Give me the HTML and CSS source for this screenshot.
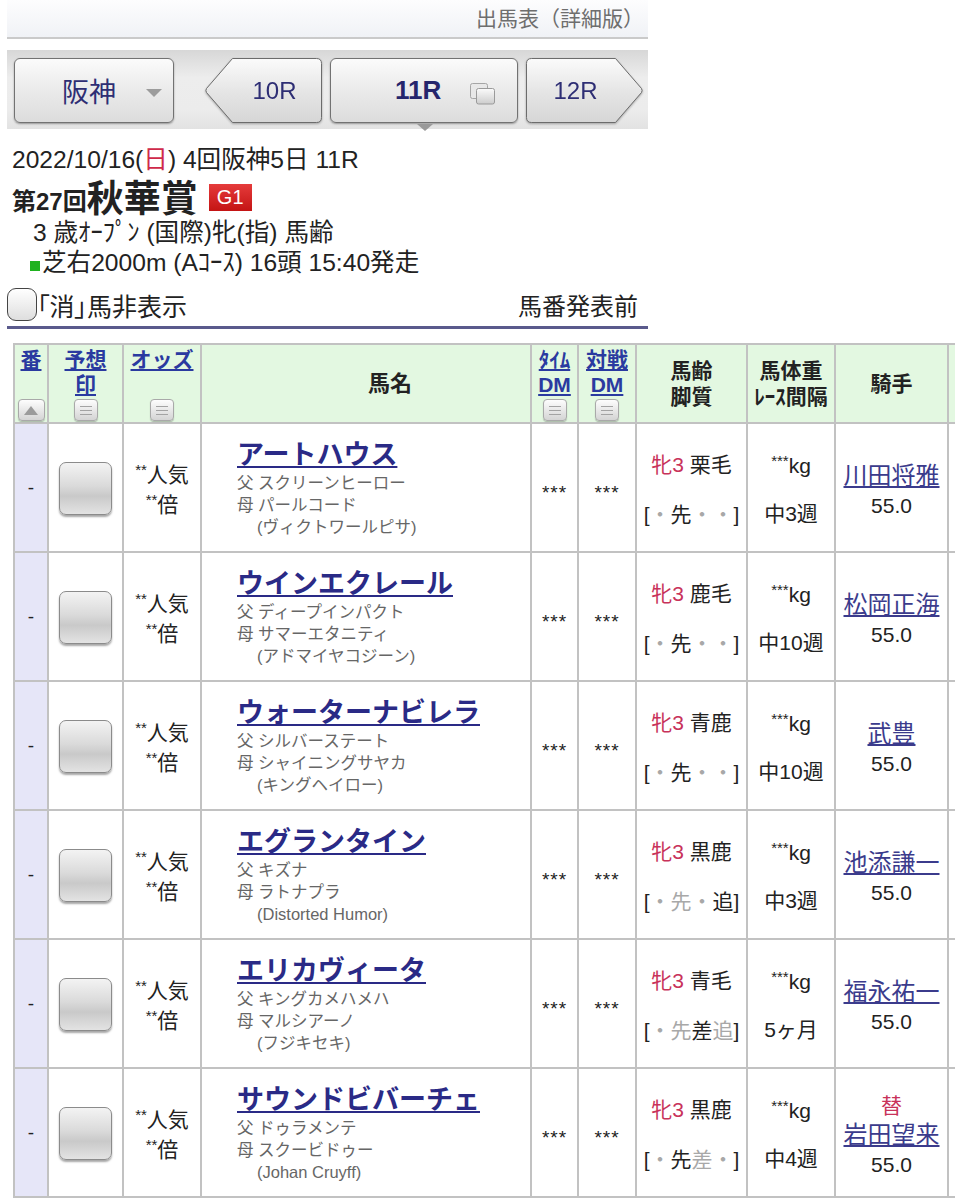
FILE: index.html
```html
<!DOCTYPE html>
<html lang="ja">
<head>
<meta charset="utf-8">
<title>出馬表（詳細版）</title>
<link rel="stylesheet" href="styles.css">
</head>
<body>
<div class="top">
  <header class="titlebar">出馬表（詳細版）</header>
  <nav class="racenav">
    <div class="btn place">阪神<span class="caret"></span></div>
    <div class="btn arrow prev">
      <svg class="shape" viewBox="0 0 117 65" width="117" height="65">
        <defs><linearGradient id="gp" x1="0" y1="0" x2="0" y2="1"><stop offset="0" stop-color="#fbfbfb"/><stop offset="0.55" stop-color="#e4e4e4"/><stop offset="1" stop-color="#d6d6d6"/></linearGradient></defs>
        <path d="M27.5,0.5 H111.5 Q116.5,0.5 116.5,5.5 V59.5 Q116.5,64.5 111.5,64.5 H27.5 L1.5,34.5 Q0.3,32.5 1.5,30.5 Z" fill="url(#gp)" stroke="#6c6c6c"/>
      </svg>
      <span class="lbl">10R</span>
    </div>
    <div class="btn cur">
      <span class="lbl">11R</span>
      <svg class="copy" viewBox="0 0 26 22" width="26" height="22">
        <defs><linearGradient id="gc" x1="0" y1="0" x2="0" y2="1"><stop offset="0" stop-color="#fbfbfb"/><stop offset="1" stop-color="#cdcdcd"/></linearGradient></defs>
        <rect x="0.5" y="0.5" width="17" height="15" rx="2" fill="#e8e8e8" stroke="#a5a5a5"/>
        <rect x="6.5" y="5.5" width="18" height="15.5" rx="2" fill="url(#gc)" stroke="#9a9a9a"/>
      </svg>
      <span class="pointer"></span>
    </div>
    <div class="btn arrow next">
      <svg class="shape" viewBox="0 0 117 65" width="117" height="65">
        <defs><linearGradient id="gn" x1="0" y1="0" x2="0" y2="1"><stop offset="0" stop-color="#fbfbfb"/><stop offset="0.55" stop-color="#e4e4e4"/><stop offset="1" stop-color="#d6d6d6"/></linearGradient></defs>
        <path d="M5.5,0.5 H89.5 L115.5,30.5 Q116.7,32.5 115.5,34.5 L89.5,64.5 H5.5 Q0.5,64.5 0.5,59.5 V5.5 Q0.5,0.5 5.5,0.5 Z" fill="url(#gn)" stroke="#6c6c6c"/>
      </svg>
      <span class="lbl">12R</span>
    </div>
  </nav>
  <section class="info">
    <div class="date">2022/10/16(<span class="sun">日</span>) 4回阪神5日 11R</div>
    <h1 class="race"><span class="kai">第27回</span>秋華賞<span class="grade">G1</span></h1>
    <div class="cond">3 歳ｵｰﾌﾟﾝ (国際)牝(指) 馬齢</div>
    <div class="course"><span class="sq"></span>芝右2000m (Aｺｰｽ) 16頭 15:40発走</div>
  </section>
  <div class="filter">
    <span class="hide"><span class="check"></span><span class="palt">「消」馬非表示</span></span>
    <span class="status">馬番発表前</span>
  </div>
</div>

<div class="tablewrap">
<table class="entries">
  <thead>
    <tr>
      <th class="c-no"><div class="hcell"><a href="#">番</a><span class="sort up"></span></div></th>
      <th class="c-mark"><div class="hcell"><a href="#">予想<br>印</a><span class="sort"></span></div></th>
      <th class="c-odds"><div class="hcell"><a href="#">オッズ</a><span class="sort"></span></div></th>
      <th class="c-name">馬名</th>
      <th class="c-tdm"><div class="hcell"><a href="#">ﾀｲﾑ<br>DM</a><span class="sort"></span></div></th>
      <th class="c-vdm"><div class="hcell"><a href="#">対戦<br>DM</a><span class="sort"></span></div></th>
      <th class="c-age">馬齢<br>脚質</th>
      <th class="c-wt">馬体重<br>ﾚｰｽ間隔</th>
      <th class="c-jk">騎手</th>
      <th class="c-ex"></th>
    </tr>
  </thead>
  <tbody>
    <tr>
      <td class="no">-</td>
      <td class="mk"><span class="markbtn"></span></td>
      <td class="od"><span class="ast">**</span>人気<br><span class="ast">**</span>倍</td>
      <td class="nm"><a class="horse" href="#">アートハウス</a><div class="ped">父 スクリーンヒーロー<br>母 パールコード<br><span class="bms">(ヴィクトワールピサ)</span></div></td>
      <td class="dm">***</td>
      <td class="dm">***</td>
      <td class="ag"><span class="sex">牝3</span> 栗毛<br><span class="st">[<i>・</i>先<i>・</i><i>・</i>]</span></td>
      <td class="wt"><span class="ast">***</span>kg<br>中3週</td>
      <td class="jk"><a href="#">川田将雅</a><br>55.0</td>
      <td class="ex"></td>
    </tr>
    <tr>
      <td class="no">-</td>
      <td class="mk"><span class="markbtn"></span></td>
      <td class="od"><span class="ast">**</span>人気<br><span class="ast">**</span>倍</td>
      <td class="nm"><a class="horse" href="#">ウインエクレール</a><div class="ped">父 ディープインパクト<br>母 サマーエタニティ<br><span class="bms">(アドマイヤコジーン)</span></div></td>
      <td class="dm">***</td>
      <td class="dm">***</td>
      <td class="ag"><span class="sex">牝3</span> 鹿毛<br><span class="st">[<i>・</i>先<i>・</i><i>・</i>]</span></td>
      <td class="wt"><span class="ast">***</span>kg<br>中10週</td>
      <td class="jk"><a href="#">松岡正海</a><br>55.0</td>
      <td class="ex"></td>
    </tr>
    <tr>
      <td class="no">-</td>
      <td class="mk"><span class="markbtn"></span></td>
      <td class="od"><span class="ast">**</span>人気<br><span class="ast">**</span>倍</td>
      <td class="nm"><a class="horse" href="#">ウォーターナビレラ</a><div class="ped">父 シルバーステート<br>母 シャイニングサヤカ<br><span class="bms">(キングヘイロー)</span></div></td>
      <td class="dm">***</td>
      <td class="dm">***</td>
      <td class="ag"><span class="sex">牝3</span> 青鹿<br><span class="st">[<i>・</i>先<i>・</i><i>・</i>]</span></td>
      <td class="wt"><span class="ast">***</span>kg<br>中10週</td>
      <td class="jk"><a href="#">武豊</a><br>55.0</td>
      <td class="ex"></td>
    </tr>
    <tr>
      <td class="no">-</td>
      <td class="mk"><span class="markbtn"></span></td>
      <td class="od"><span class="ast">**</span>人気<br><span class="ast">**</span>倍</td>
      <td class="nm"><a class="horse" href="#">エグランタイン</a><div class="ped">父 キズナ<br>母 ラトナプラ<br><span class="bms">(Distorted Humor)</span></div></td>
      <td class="dm">***</td>
      <td class="dm">***</td>
      <td class="ag"><span class="sex">牝3</span> 黒鹿<br><span class="st">[<i>・</i><i>先</i><i>・</i>追]</span></td>
      <td class="wt"><span class="ast">***</span>kg<br>中3週</td>
      <td class="jk"><a href="#">池添謙一</a><br>55.0</td>
      <td class="ex"></td>
    </tr>
    <tr>
      <td class="no">-</td>
      <td class="mk"><span class="markbtn"></span></td>
      <td class="od"><span class="ast">**</span>人気<br><span class="ast">**</span>倍</td>
      <td class="nm"><a class="horse" href="#">エリカヴィータ</a><div class="ped">父 キングカメハメハ<br>母 マルシアーノ<br><span class="bms">(フジキセキ)</span></div></td>
      <td class="dm">***</td>
      <td class="dm">***</td>
      <td class="ag"><span class="sex">牝3</span> 青毛<br><span class="st">[<i>・</i><i>先</i>差<i>追</i>]</span></td>
      <td class="wt"><span class="ast">***</span>kg<br>5ヶ月</td>
      <td class="jk"><a href="#">福永祐一</a><br>55.0</td>
      <td class="ex"></td>
    </tr>
    <tr>
      <td class="no">-</td>
      <td class="mk"><span class="markbtn"></span></td>
      <td class="od"><span class="ast">**</span>人気<br><span class="ast">**</span>倍</td>
      <td class="nm"><a class="horse" href="#">サウンドビバーチェ</a><div class="ped">父 ドゥラメンテ<br>母 スクービドゥー<br><span class="bms">(Johan Cruyff)</span></div></td>
      <td class="dm">***</td>
      <td class="dm">***</td>
      <td class="ag"><span class="sex">牝3</span> 黒鹿<br><span class="st">[<i>・</i>先<i>差</i><i>・</i>]</span></td>
      <td class="wt"><span class="ast">***</span>kg<br>中4週</td>
      <td class="jk jk3"><span class="chg">替</span><br><a href="#">岩田望来</a><br>55.0</td>
      <td class="ex"></td>
    </tr>
  </tbody>
</table>
</div>
</body>
</html>
```

FILE: styles.css
```css
* { box-sizing: border-box; }

body {
  margin: 0;
  background: #ffffff;
  color: #222222;
  font-family: "Liberation Sans", "Noto Sans CJK JP", sans-serif;
  overflow: hidden;
}

a { color: #2b2b86; }

.top {
  width: 641px;
  margin-left: 7px;
}

.titlebar {
  height: 39px;
  border-bottom: 2px solid #cacaca;
  background: linear-gradient(#fdfdfe, #f0f2f6);
  text-align: right;
  padding-right: 4px;
  font-size: 21px;
  line-height: 38px;
  color: #6e6e6e;
}

.racenav {
  margin-top: 11px;
  height: 79px;
  padding: 8px 5px 0 7px;
  display: flex;
  align-items: flex-start;
  gap: 8px;
  background: linear-gradient(#d7d7d7, #ededed 35%, #ececec 75%, #e2e2e2);
}

.btn {
  height: 65px;
  position: relative;
  display: flex;
  align-items: center;
  color: #2e2e74;
}

.place,
.cur {
  border: 1px solid #727272;
  border-radius: 6px;
  background: linear-gradient(#fbfbfb, #ececec 45%, #dcdcdc);
  box-shadow: 0 1px 2px rgba(0, 0, 0, 0.35);
}

.place {
  width: 160px;
  margin-right: 23px;
  padding-left: 47px;
  font-size: 27px;
}

.caret {
  margin-left: 30px;
  margin-top: 4px;
  width: 0;
  height: 0;
  border-top: 8px solid #9c9c9c;
  border-left: 8px solid transparent;
  border-right: 8px solid transparent;
}

.cur {
  width: 188px;
  padding-left: 64px;
  font-size: 26px;
  font-weight: bold;
  color: #25256c;
}

.copy {
  margin-left: 29px;
  margin-top: 6px;
}

.pointer {
  position: absolute;
  left: 86px;
  bottom: -9px;
  width: 0;
  height: 0;
  border-top: 7px solid #9a9a9a;
  border-left: 8px solid transparent;
  border-right: 8px solid transparent;
}

.arrow {
  width: 117px;
  justify-content: center;
  font-size: 24px;
  filter: drop-shadow(0 1px 1px rgba(0, 0, 0, 0.3));
}

.arrow .shape {
  position: absolute;
  left: 0;
  top: 0;
}

.arrow .lbl {
  position: relative;
}

.prev { padding-left: 22px; }
.next { padding-right: 18px; }

.info {
  padding: 16px 0 0 5px;
  font-size: 24.6px;
}

.date { line-height: 30px; }
.sun { color: #cf2a4a; }

.race {
  margin: 0;
  height: 42px;
  display: flex;
  align-items: center;
  font-size: 37px;
  font-weight: bold;
}

.kai {
  font-size: 24px;
  margin-top: 6px;
}

.grade {
  margin-left: 11px;
  margin-top: 2px;
  width: 43px;
  height: 27px;
  background: linear-gradient(#e53b3b, #c41414);
  color: #ffffff;
  font-size: 20px;
  font-weight: normal;
  display: flex;
  align-items: center;
  justify-content: center;
}

.cond {
  line-height: 32px;
  padding-left: 21px;
}

.course {
  line-height: 28px;
  padding-left: 18px;
  display: flex;
  align-items: center;
}

.sq {
  width: 10px;
  height: 10px;
  background: #1fb21f;
  margin: 6px 2px 0 0;
}

.filter {
  margin-top: 9px;
  height: 43px;
  border-bottom: 3px solid #5a5a8c;
  display: flex;
  align-items: center;
  justify-content: space-between;
  font-size: 24px;
  padding-right: 10px;
  padding-bottom: 3px;
}

.hide {
  display: flex;
  align-items: center;
}

.check {
  width: 30px;
  height: 33px;
  border: 1.5px solid #444;
  border-radius: 9px;
  background: linear-gradient(#ffffff, #dedede);
}

.palt {
  font-feature-settings: "palt";
  font-size: 25px;
}

.status { font-size: 24px; }

/* table */
.tablewrap {
  margin: 14px 0 0 13px;
  width: 942px;
  overflow: hidden;
}

.entries {
  width: 1036px;
  table-layout: fixed;
  border-collapse: separate;
  border-spacing: 0;
  border-top: 2px solid #c2c2c2;
  border-left: 2px solid #c2c2c2;
  font-size: 21px;
}

.entries th,
.entries td {
  border-right: 2px solid #c2c2c2;
  border-bottom: 2px solid #c2c2c2;
  padding: 0;
  text-align: center;
  vertical-align: middle;
  white-space: nowrap;
}

.entries th {
  height: 79px;
  background: #e3f8e1;
  font-size: 21px;
  line-height: 26px;
  color: #222;
}

.c-no { width: 34px; }
.c-mark { width: 75px; }
.c-odds { width: 78px; }
.c-name { width: 330px; }
.c-tdm { width: 47px; }
.c-vdm { width: 58px; }
.c-age { width: 111px; }
.c-wt { width: 88px; }
.c-jk { width: 113px; }
.c-ex { width: 100px; }

.entries th.c-name {
  padding-left: 48px;
  font-size: 22px;
}

.hcell {
  height: 77px;
  display: flex;
  flex-direction: column;
  align-items: center;
  justify-content: space-between;
  padding: 2px 0 1px;
}

.hcell a {
  color: #2a3aa0;
  line-height: 25px;
}

.sort {
  display: flex;
  align-items: center;
  justify-content: center;
  width: 24px;
  height: 22px;
  border: 1px solid #a9a9a9;
  border-radius: 4px;
  box-shadow: 0 1px 1px rgba(0, 0, 0, 0.25);
  background:
    linear-gradient(#a3a3a3, #a3a3a3) no-repeat 5px 6px / 12px 1px,
    linear-gradient(#a3a3a3, #a3a3a3) no-repeat 5px 10px / 12px 1px,
    linear-gradient(#a3a3a3, #a3a3a3) no-repeat 5px 14px / 12px 1px,
    linear-gradient(#fdfdfd, #d4d4d4);
}

.sort.up {
  width: 27px;
  background: linear-gradient(#fdfdfd, #d4d4d4);
}

.sort.up::before {
  content: "";
  width: 0;
  height: 0;
  border-bottom: 9px solid #9b9b9b;
  border-left: 7px solid transparent;
  border-right: 7px solid transparent;
}

.entries td {
  height: 129px;
  line-height: 30px;
}

td.no {
  background: #e6e6f8;
  font-size: 19px;
}

.markbtn {
  display: inline-block;
  vertical-align: middle;
  width: 53px;
  height: 53px;
  margin-top: 2px;
  border: 1.5px solid #8b8b8b;
  border-radius: 7px;
  background: linear-gradient(#f3f3f3, #dadada 45%, #c9c9c9 65%, #e3e3e3);
  box-shadow: 0 2px 2px rgba(0, 0, 0, 0.35);
}

.ast {
  font-size: 15px;
  vertical-align: 7px;
  line-height: 0;
}

td.od { line-height: 30px; padding-top: 4px; }

td.nm {
  text-align: left;
  padding-left: 35px;
}

.horse {
  font-size: 27px;
  font-weight: bold;
  line-height: 34px;
  color: #2a2a86;
}

.ped {
  font-size: 16.5px;
  line-height: 22px;
  color: #666666;
}

.bms { padding-left: 20px; }

td.dm {
  font-size: 19px;
  letter-spacing: 1px;
  padding-top: 10px;
}

td.ag {
  line-height: 50px;
  padding-top: 4px;
}

.sex { color: #c8325a; }

.st i {
  font-style: normal;
  color: #a8a8a8;
}

td.wt {
  line-height: 48px;
  padding-top: 4px;
}

td.jk {
  line-height: 29px;
  padding-top: 5px;
}

td.jk a {
  font-size: 24px;
  color: #3b3b8c;
}

.chg { color: #c8325a; }
.jk3 { padding-top: 2px; }
```
